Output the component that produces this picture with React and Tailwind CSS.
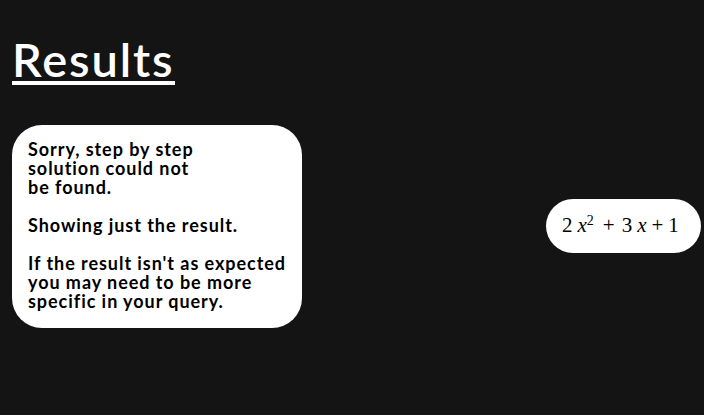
export default function App() {
  return (
    <div className="min-h-[415px] bg-[#141414] pl-3 pr-[3px] pt-[37px] overflow-hidden">
      <h1 className="w-fit border-b-[4px] border-white text-white text-[47px] leading-[44px] tracking-[1.9px] font-semibold font-['Lato',sans-serif]">
        Results
      </h1>
      <div className="flex items-start justify-between mt-[40px]">
        <div className="w-[290px] h-[203px] bg-white rounded-[30px] pl-4 pt-[15px] text-black text-[18px] leading-[19px] tracking-[0.95px] font-bold font-['Lato',sans-serif]">
          <p>Sorry, step by step<br />solution could not<br />be found.</p>
          <p className="mt-[19px]">Showing just the result.</p>
          <p className="mt-[19px]">If the result isn't as expected<br />you may need to be more<br />specific in your query.</p>
        </div>
        <div className="flex items-center justify-start pl-4 mt-[74px] w-[155px] h-[54px] bg-white rounded-[27px] text-black text-[21px] font-['Liberation_Serif',serif]">
          <span className="whitespace-nowrap">2<i className="ml-[5px]">x</i><sup className="text-[14px]">2</sup><span className="ml-[9px]">+</span><span className="ml-[7px]">3</span><i className="ml-[5px]">x</i><span className="ml-[5px]">+</span><span className="ml-[5px]">1</span></span>
        </div>
      </div>
    </div>
  );
}
